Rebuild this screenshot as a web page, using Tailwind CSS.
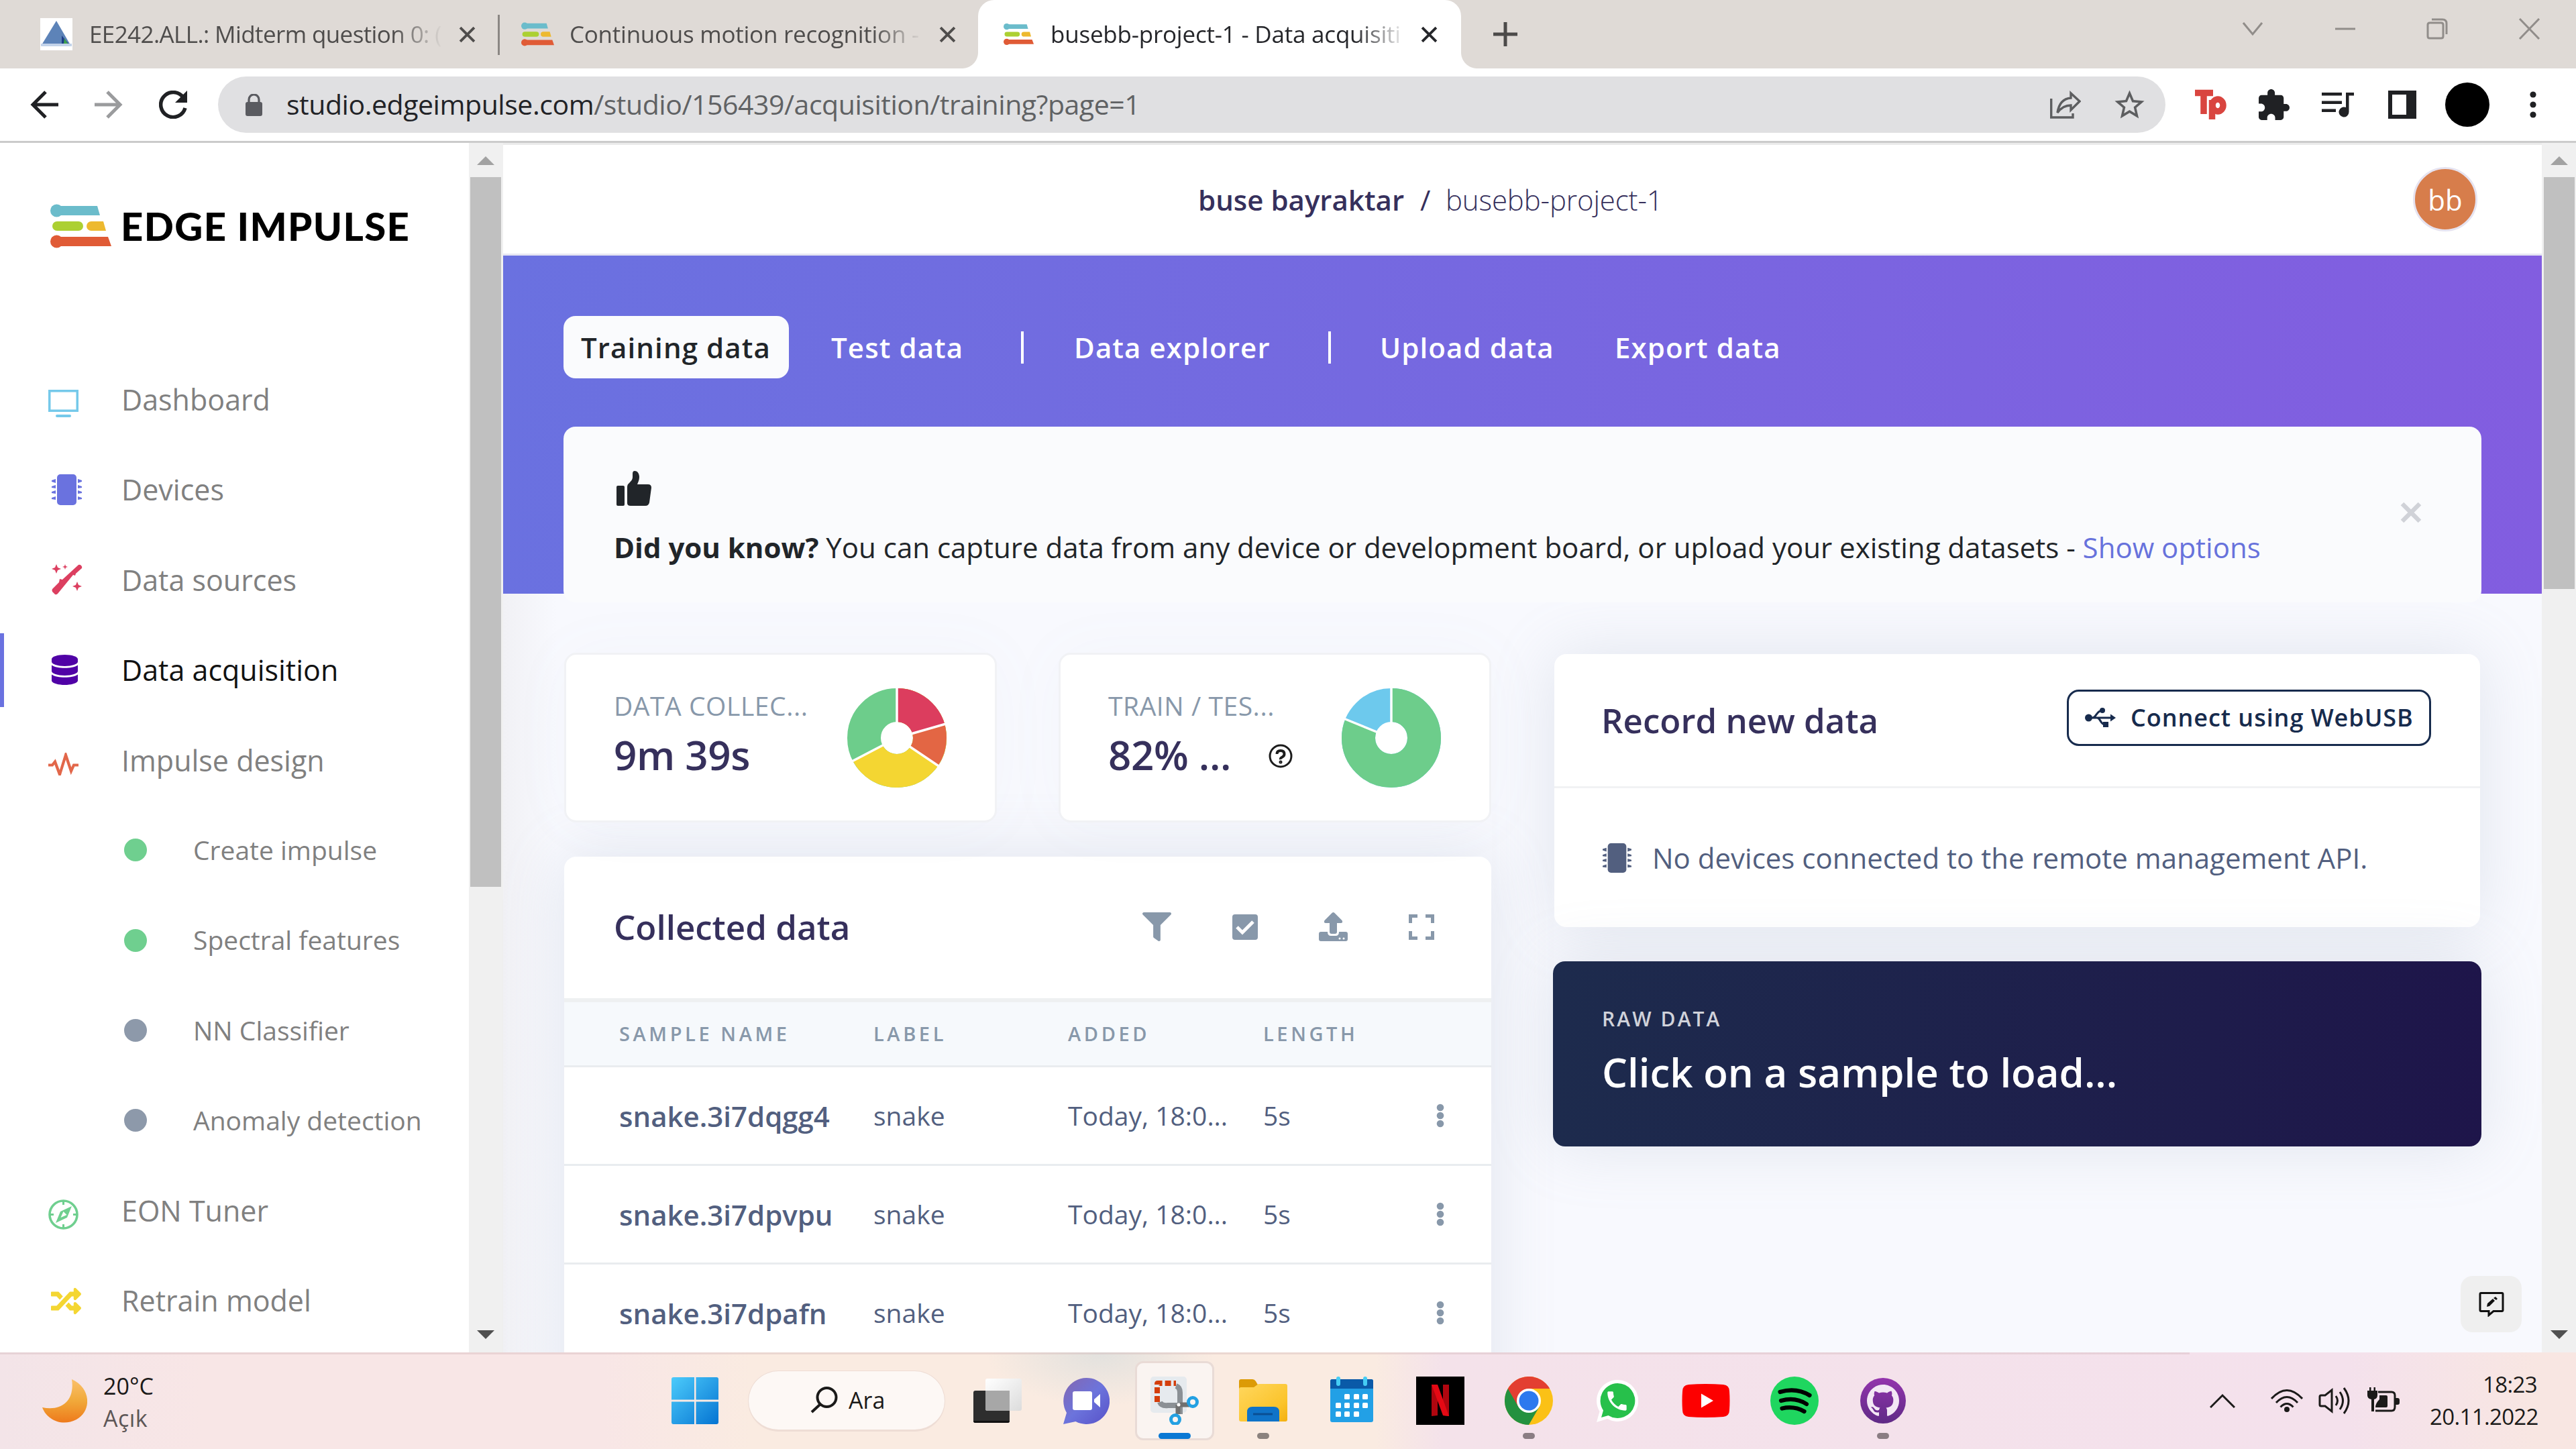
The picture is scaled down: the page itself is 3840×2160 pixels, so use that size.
<!DOCTYPE html>
<html lang="en">
<head>
<meta charset="utf-8">
<title>busebb-project-1 - Data acquisition - Edge Impulse</title>
<script src="https://cdn.jsdelivr.net/npm/@tailwindcss/browser@4"></script>
</head>
<body>
<svg class="hidden">
  <defs>
    <symbol id="chip" viewBox="0 0 45 46">
      <rect x="8" y="0" width="29" height="46" rx="5"/>
      <path d="M0 9l6-2v6l-6-2zM0 18l6-2v5l-6-1zM0 26l6-2v5l-6-1zM0 35l6-2v5l-6-1zM45 9l-6-2v6l6-2zM45 18l-6-2v5l6-1zM45 26l-6-2v5l6-1zM45 35l-6-2v5l6-1z"/>
    </symbol>
    <symbol id="ei" viewBox="0 0 91 66">
      <path d="M9 3h61l4 14H9z" fill="#6bbccb"/><circle cx="9.500" cy="10" r="9.500" fill="#6bbccb"/>
      <rect x="3" y="26" width="46" height="14" rx="7" fill="#acd032"/>
      <path d="M61 26h18l4 14H61a7 7 0 0 1 0-14z" fill="#edb92f"/>
      <path d="M9 49h77l5 14H9z" fill="#e05b36"/><circle cx="9.500" cy="56" r="9.500" fill="#e05b36"/>
    </symbol>
    <symbol id="x" viewBox="0 0 24 24"><path d="M2 2l20 20M22 2L2 22" fill="none" stroke="currentColor" stroke-width="3.800"/></symbol>
    <symbol id="kebab" viewBox="0 0 12 36"><circle cx="6" cy="6" r="5.300"/><circle cx="6" cy="18" r="5.300"/><circle cx="6" cy="30" r="5.300"/></symbol>
  </defs>
</svg>

<div class="relative flex h-[2160px] w-[3840px] flex-col overflow-hidden bg-white font-['Open_Sans','Noto_Sans',sans-serif] whitespace-nowrap">

  <!-- Tab strip -->
  <div class="flex h-[102px] shrink-0 bg-[#dfdad6] text-[35px] text-[#4f4d4c]">
    <div class="flex h-[102px] w-[742px] items-center pl-[60px]">
      <svg class="h-12 w-12 shrink-0" viewBox="0 0 48 48"><rect width="48" height="48" fill="#fff"/><path d="M24 4L45 40H2z" fill="#5d83b8"/><path d="M1 38h46v4H1z" fill="#c3d3ea"/><path d="M32 26l10 12H32z" fill="#1f3f88"/><path d="M36 30l5 8h-6z" fill="#3fa34d"/></svg>
      <div class="ml-[25px] w-[527px] tracking-[-0.6px] [mask-image:linear-gradient(90deg,#000_86%,transparent_100%)]">EE242.ALL.: Midterm question 0: (</div>
      <svg class="ml-[24px] h-[25px] w-[25px] shrink-0"><use href="#x"/></svg>
    </div>
    <div class="mt-[22px] h-[60px] w-[3px] bg-[#8b8784]"></div>
    <div class="flex h-[102px] w-[713px] items-center pl-[32px]">
      <svg class="h-[36px] w-[49px] shrink-0"><use href="#ei"/></svg>
      <div class="ml-[23px] w-[526px] tracking-[-0.25px] [mask-image:linear-gradient(90deg,#000_86%,transparent_100%)]">Continuous motion recognition -</div>
      <svg class="ml-[25px] h-[25px] w-[25px] shrink-0"><use href="#x"/></svg>
    </div>
    <div class="relative flex h-[102px] w-[720px] items-center rounded-t-[24px] bg-white pl-[38px] text-[#26272b]">
      <div class="absolute bottom-0 -left-[24px] h-[24px] w-[24px] bg-[radial-gradient(circle_at_0_0,transparent_23.5px,#fff_24.5px)]"></div>
      <div class="absolute -right-[24px] bottom-0 h-[24px] w-[24px] bg-[radial-gradient(circle_at_100%_0,transparent_23.5px,#fff_24.5px)]"></div>
      <svg class="h-[34px] w-[45px] shrink-0"><use href="#ei"/></svg>
      <div class="ml-[25px] w-[526px] tracking-[-0.22px] [mask-image:linear-gradient(90deg,#000_86%,transparent_101%)]">busebb-project-1 - Data acquisiti</div>
      <svg class="ml-[26px] h-[25px] w-[25px] shrink-0"><use href="#x"/></svg>
    </div>
    <svg class="mt-[33px] ml-[48px] h-[36px] w-[36px]" viewBox="0 0 36 36"><path d="M18 0v36M0 18h36" stroke="#4c4a49" stroke-width="5"/></svg>
    <svg class="mt-[27px] mr-[21px] ml-auto h-[32px] w-[476px]" viewBox="0 0 476 32" fill="none" stroke="#918d8a" stroke-width="3"><path d="M1 7l14 17L29 7M138 16h30M276 10q0-3 3-3h17q3 0 3 3v17q0 3-3 3h-17q-3 0-3-3zM282 2h16q6 0 6 6v16M413 1l29 30M442 1l-29 30"/></svg>
  </div>

  <!-- Toolbar -->
  <div class="flex h-[111px] shrink-0 items-center border-b-[3px] border-[#cbcbcb] bg-white pl-[45px]">
    <svg class="h-[42px] w-[42px]" viewBox="0 0 42 42" fill="none" stroke="#202124" stroke-width="5"><path d="M42 21H4M23 2L4 21l19 19"/></svg>
    <svg class="ml-[54px] h-[42px] w-[42px]" viewBox="0 0 42 42" fill="none" stroke="#9a9b9d" stroke-width="5"><path d="M0 21h38M19 2l19 19-19 19"/></svg>
    <svg class="ml-[54px] h-[42px] w-[42px]" viewBox="0 0 42 42"><path d="M36 10A18.500 18.500 0 1 0 39 26" fill="none" stroke="#202124" stroke-width="5.500"/><path d="M42 0v18H24z" fill="#202124"/></svg>
    <div class="ml-[46px] flex h-[84px] w-[2903px] items-center rounded-full bg-[#e0e0e2] pl-[41px]">
      <svg class="h-[33px] w-[25px]" viewBox="0 0 25 33"><rect y="12" width="25" height="21" rx="3" fill="#5a5b60"/><path d="M5 13V8.500a7.500 7.500 0 0 1 15 0V13" fill="none" stroke="#5a5b60" stroke-width="3.200"/></svg>
      <div class="ml-[36px] text-[41px] tracking-[-0.45px] text-[#606264]"><span class="text-[#222327]">studio.edgeimpulse.com</span>/studio/156439/acquisition/training?page=1</div>
      <svg class="mr-[46px] ml-auto h-[42px] w-[46px]" viewBox="0 0 46 42" fill="none" stroke="#5d5e60" stroke-width="3.400"><path d="M1.700 12v28H34V34M31 4l13 12-13 13v-7c-9 0-15 4-20 11 2-13 8-21 20-22z"/></svg>
      <svg class="mr-[27px] h-[53px] w-[53px]" viewBox="0 0 24 24" fill="#5d5e60"><path d="M22 9.240l-7.190-.62L12 2 9.190 8.630 2 9.240l5.460 4.730L5.820 21 12 17.270 18.180 21l-1.630-7.030L22 9.240zM12 15.400l-3.760 2.270 1-4.280-3.320-2.880 4.380-.38L12 6.100l1.710 4.040 4.380.38-3.320 2.880 1 4.280L12 15.400z"/></svg>
    </div>
    <svg class="ml-[43px] h-[46px] w-[48px]" viewBox="0 0 48 46"><g fill="none" stroke="#d9453f" stroke-width="9.500"><path d="M1 5.500h27M14 5v32"/><ellipse cx="35" cy="24" rx="8" ry="9"/><path d="M26.500 16v29"/></g></svg>
    <svg class="ml-[46px] h-[46px] w-[50px]" viewBox="1.500 1 22 21" fill="#202124"><path d="M20.500 11H19V7c0-1.100-.9-2-2-2h-4V3.500C13 2.120 11.880 1 10.500 1S8 2.120 8 3.500V5H4c-1.100 0-1.990.9-1.990 2v3.800H3.500c1.490 0 2.700 1.210 2.700 2.700s-1.210 2.700-2.700 2.700H2V20c0 1.100.9 2 2 2h3.800v-1.500c0-1.490 1.210-2.700 2.700-2.700 1.490 0 2.700 1.210 2.700 2.700V22H17c1.100 0 2-.9 2-2v-4h1.500c1.380 0 2.500-1.120 2.500-2.500S21.880 11 20.500 11z"/></svg>
    <svg class="ml-[46px] h-[37px] w-[48px]" viewBox="0 0 48 37" fill="#202124"><path d="M0 0h30v4.500H0zM0 12.500h30V17H0zM0 24.500h21V29H0zM36 0h12v4.500h-7.500V29a7.500 7.500 0 1 1-4.500-6.900z"/></svg>
    <svg class="ml-[51px] h-[42px] w-[42px]" viewBox="0 0 42 42"><path d="M0 0h42v42H0zM6 6v30h21V6z" fill="#202124" fill-rule="evenodd"/></svg>
    <div class="ml-[43px] h-[66px] w-[66px] rounded-full bg-black"></div>
    <svg class="ml-[60px] h-[40px] w-[10px]" viewBox="0 0 10 40" fill="#202124"><circle cx="5" cy="5" r="4.600"/><circle cx="5" cy="20" r="4.600"/><circle cx="5" cy="35" r="4.600"/></svg>
  </div>

  <!-- Page -->
  <div class="flex h-[1803px] shrink-0 overflow-hidden">

    <!-- Sidebar -->
    <aside class="flex w-[699px] shrink-0 flex-col bg-white text-[43px] text-[#808080]">
      <div class="flex h-[315px] shrink-0 items-start pt-[91px] pl-[75px]">
        <svg class="h-[66px] w-[91px] shrink-0"><use href="#ei"/></svg>
        <div class="ml-[14px] font-['Lato',sans-serif] text-[58px] leading-[66px] font-black tracking-[1.4px] text-black">EDGE IMPULSE</div>
      </div>
      <div class="flex h-[134.400px] shrink-0 items-center pl-[72px]">
        <div class="w-[109px]"><svg class="mt-[12px] h-[42px] w-[45px]" viewBox="0 0 45 42" fill="#75c9ea"><path d="M0 1h45v33H0zM3.500 4.500v26h38v-26z" fill-rule="evenodd"/><rect x="11" y="38" width="23" height="4" rx="2"/></svg></div>
        <span class="mt-[2px]">Dashboard</span>
      </div>
      <div class="flex h-[134.400px] shrink-0 items-center pl-[77px]">
        <div class="w-[104px]"><svg class="h-[46px] w-[45px] fill-[#6a72df]"><use href="#chip"/></svg></div>
        <span class="mt-[2px]">Devices</span>
      </div>
      <div class="flex h-[134.400px] shrink-0 items-center pl-[77px]">
        <div class="w-[104px]"><svg class="h-[46px] w-[46px]" viewBox="0 0 46 46" fill="#dc3f60"><path d="M1 37L11 27l1-5 4 1L40 1q2-1 4 1t1 4L36 14l-1 3-3-1L9 44q-2 2-4 1l-4-4q-1-2 0-4z"/><path d="M7 0l2 5 5 2-5 2-2 5-2-5-5-2 5-2zM20 0l1 3 3 1-3 1-1 3-1-3-3-1 3-1zM38 26l2 5 5 2-5 2-2 5-2-5-5-2 5-2z"/></svg></div>
        <span class="mt-[2px]">Data sources</span>
      </div>
      <div class="relative flex h-[134.400px] shrink-0 items-center pl-[77px] text-[#121212]">
        <div class="absolute top-[13px] left-0 h-[110px] w-[6px] bg-[#6a72e0]"></div>
        <div class="w-[104px]"><svg class="h-[45px] w-[39px]" viewBox="0 0 448 512" preserveAspectRatio="none" fill="#5002a6"><path d="M448 73.143v45.714C448 159.143 347.667 192 224 192S0 159.143 0 118.857V73.143C0 32.857 100.333 0 224 0s224 32.857 224 73.143zM448 176v102.857C448 319.143 347.667 352 224 352S0 319.143 0 278.857V176c48.125 33.143 136.208 48.572 224 48.572S399.874 209.143 448 176zm0 160v102.857C448 479.143 347.667 512 224 512S0 479.143 0 438.857V336c48.125 33.143 136.208 48.572 224 48.572S399.874 369.143 448 336z"/></svg></div>
        <span class="mt-[2px]">Data acquisition</span>
      </div>
      <div class="flex h-[134.400px] shrink-0 items-center pl-[72px]">
        <div class="w-[109px]"><svg class="mt-[12px] h-[34px] w-[45px]" viewBox="0 0 45 34" fill="none" stroke="#e2674a" stroke-width="4.200"><path d="M0 18.500h6l4-5 7 19 9-29 8 24 4-9h7"/></svg></div>
        <span class="mt-[2px]">Impulse design</span>
      </div>
      <div class="flex h-[134.400px] shrink-0 items-center pl-[185px] text-[39px]"><div class="mr-[69px] h-[34px] w-[34px] rounded-full bg-[#6fcf8f]"></div><span>Create impulse</span></div>
      <div class="flex h-[134.400px] shrink-0 items-center pl-[185px] text-[39px]"><div class="mr-[69px] h-[34px] w-[34px] rounded-full bg-[#6fcf8f]"></div><span>Spectral features</span></div>
      <div class="flex h-[134.400px] shrink-0 items-center pl-[185px] text-[39px]"><div class="mr-[69px] h-[34px] w-[34px] rounded-full bg-[#8d99aa]"></div><span>NN Classifier</span></div>
      <div class="flex h-[134.400px] shrink-0 items-center pl-[185px] text-[39px]"><div class="mr-[69px] h-[34px] w-[34px] rounded-full bg-[#8d99aa]"></div><span>Anomaly detection</span></div>
      <div class="flex h-[134.400px] shrink-0 items-center pl-[72px]">
        <div class="w-[109px]"><svg class="mt-[11px] h-[45px] w-[45px]" viewBox="0 0 45 45" fill="none" stroke="#6fcf8f" stroke-width="3.600"><circle cx="22.500" cy="22.500" r="20.500"/><path d="M22.500 3v5M22.500 37v5M3 22.500h5M37 22.500h5" stroke-width="3"/><path d="M35 10l-7 17-17 8 7-17zM22.500 18l5 5-9 4z" fill="#6fcf8f" fill-rule="evenodd" stroke="none"/></svg></div>
        <span class="mt-[1px]">EON Tuner</span>
      </div>
      <div class="flex h-[134.400px] shrink-0 items-center pl-[76px]">
        <div class="w-[105px]"><svg class="h-[45px] w-[45px]" viewBox="0 0 512 512" fill="#f4d632"><path d="M504.971 359.029c9.373 9.373 9.373 24.569 0 33.941l-80 79.984c-15.010 15.010-40.971 4.490-40.971-16.971V416h-58.785a12.004 12.004 0 0 1-8.773-3.812l-70.556-75.596 53.333-57.143L352 336h32v-39.981c0-21.438 25.943-31.998 40.971-16.971l80 79.981zM12 176h84l52.781 56.551 53.333-57.143-70.556-75.596A11.999 11.999 0 0 0 122.785 96H12c-6.627 0-12 5.373-12 12v56c0 6.627 5.373 12 12 12zm372 0v39.984c0 21.460 25.961 31.980 40.971 16.971l80-79.984c9.373-9.373 9.373-24.569 0-33.941l-80-79.981C409.943 24.021 384 34.582 384 56.019V96h-58.785a12.004 12.004 0 0 0-8.773 3.812L96 336H12c-6.627 0-12 5.373-12 12v56c0 6.627 5.373 12 12 12h110.785c3.326 0 6.503-1.381 8.773-3.812L352 176h32z"/></svg></div>
        <span class="mt-[1px]">Retrain model</span>
      </div>
    </aside>
    <div class="flex w-[51px] shrink-0 flex-col items-center bg-[#f0f0f0] pt-[20px] pr-[1px]">
      <svg class="h-[13px] w-[26px]" viewBox="0 0 26 13"><path d="M13 0l13 13H0z" fill="#a2a2a2"/></svg>
      <div class="mt-[18px] h-[1058px] w-[46px] bg-[#c0c0c0]"></div>
      <svg class="mt-auto mb-[20px] h-[13px] w-[26px]" viewBox="0 0 26 13"><path d="M13 13L26 0H0z" fill="#505050"/></svg>
    </div>

    <!-- Main -->
    <main class="relative flex w-[3039px] shrink-0 flex-col bg-[linear-gradient(90deg,#f1f1f5_0px,#f8f9fe_80px)]">
      <div class="relative flex h-[168px] shrink-0 items-center border-t-[3px] border-b-[3px] border-t-[#ebebeb] border-b-[#e6e6f2] bg-white pl-[1036px] text-[42px] text-[#36305c]">
        <span class="w-[331px] font-semibold">buse bayraktar</span><span class="w-[38px]">/</span><span class="font-light tracking-[-0.15px]">busebb-project-1</span>
        <div class="mr-[96px] ml-auto flex h-[96px] w-[96px] items-center justify-center rounded-full border-[3px] border-[#e6e3f0] bg-[#d77d4b] text-white">bb</div>
      </div>
      <section class="h-[504px] shrink-0 bg-linear-to-r from-[#6a71e0] to-[#825de0] pt-[90px] pl-[90px]">
        <nav class="flex h-[93px] items-center text-[42px] font-semibold tracking-[1.1px] text-white">
          <div class="flex h-[93px] w-[336px] items-center rounded-[18px] bg-[#fafbfd] pl-[26px] text-[#212529]">Training data</div>
          <div class="ml-[63px] w-[283px]">Test data</div>
          <div class="h-[48px] w-[4px] bg-white"></div>
          <div class="ml-[75px] w-[379px]">Data explorer</div>
          <div class="h-[48px] w-[4px] bg-white"></div>
          <div class="ml-[73px] w-[350px]">Upload data</div>
          <div>Export data</div>
        </nav>
        <div class="relative mt-[72px] flex h-[262px] w-[2859px] flex-col rounded-[18px] bg-[#fafbfd] pt-[66px] pl-[75px] text-[42px] text-[#212529]">
          <svg class="ml-[4px] h-[52px] w-[52px]" viewBox="0 0 52 52" fill="#212529"><rect y="22" width="12" height="30" rx="2"/><path d="M16 24q0-4 3-6c4-4 5-6 5-9V4q0-4 3-4c5 0 7 5 7 9 0 5-2 8-3 11h16q5 0 5 5l-3 22q-1 5-6 5H21q-5 0-5-4z"/></svg>
          <div class="mt-[31px] leading-[62px]"><b>Did you know?</b> You can capture data from any device or development board, or upload your existing datasets - <span class="text-[#6772dc]">Show options</span></div>
          <svg class="absolute top-[111px] right-[88px] h-[34px] w-[34px]" viewBox="0 0 34 34"><path d="M4 4l26 26M30 4L4 30" stroke="#d0d2d8" stroke-width="6.500"/></svg>
        </div>
      </section>

      <div class="flex pt-[88px] pl-[91px]">
        <div class="w-[1382px]">
          <div class="flex justify-between">
            <div class="flex h-[253px] w-[645px] justify-between rounded-[18px] border-[3px] border-[#f1f2f5] bg-white pt-[43px] pr-[72px] pl-[71px] shadow-[0_0_96px_rgba(136,152,170,0.04)]">
              <div>
                <div class="pt-[3px] text-[39px] leading-[60px] tracking-[0.55px] text-[#8898aa]">DATA COLLEC...</div>
                <div class="mt-[1px] text-[60px] leading-[84px] font-semibold tracking-[-0.3px] text-[#36305c]">9m 39s</div>
              </div>
              <svg class="mt-[7px] h-[148px] w-[148px] shrink-0" viewBox="-74 -74 148 148"><g transform="rotate(-90)" fill="none" stroke-width="50"><circle r="49" pathLength="360" stroke="#6dcd8b"/><circle r="49" pathLength="360" stroke="#f4d632" stroke-dasharray="242 360"/><circle r="49" pathLength="360" stroke="#e36644" stroke-dasharray="124 360"/><circle r="49" pathLength="360" stroke="#dc3d5e" stroke-dasharray="74 360"/></g><path d="M0 0V-76M0 0L73-21M0 0L63 42.500M0 0L-67 35" stroke="#fff" stroke-width="3.500"/></svg>
            </div>
            <div class="flex h-[253px] w-[645px] justify-between rounded-[18px] border-[3px] border-[#f1f2f5] bg-white pt-[43px] pr-[72px] pl-[71px] shadow-[0_0_96px_rgba(136,152,170,0.04)]">
              <div>
                <div class="pt-[3px] text-[39px] leading-[60px] tracking-[0.55px] text-[#8898aa]">TRAIN / TES...</div>
                <div class="mt-[1px] flex text-[60px] leading-[84px] font-semibold tracking-[-0.3px] text-[#36305c]"><span class="w-[239px]">82% ...</span><svg class="mt-[26px] h-[36px] w-[36px]" viewBox="0 0 36 36" fill="none" stroke="#1c1c1c"><circle cx="18" cy="18" r="16" stroke-width="3"/><path d="M12.500 15q0-5 5.500-5t5.500 5q0 3-3 4.500t-2.500 3.500" stroke-width="4"/><circle cx="18" cy="27" r="1" stroke-width="3"/></svg></div>
              </div>
              <svg class="mt-[7px] h-[148px] w-[148px] shrink-0" viewBox="-74 -74 148 148"><g transform="rotate(-90)" fill="none" stroke-width="50"><circle r="49" pathLength="360" stroke="#6dc9ed"/><circle r="49" pathLength="360" stroke="#6dcd8b" stroke-dasharray="292 360"/></g><path d="M0 0V-76M0 0L-71-29" stroke="#fff" stroke-width="3.500"/></svg>
            </div>
          </div>

          <div class="mt-[51px] h-[900px] rounded-[18px] bg-white text-[#525f7f] shadow-[0_0_96px_rgba(136,152,170,0.2)]">
            <div class="flex h-[211px] items-center pr-[85px] pb-[2px] pl-[74px] text-[51px] font-semibold text-[#36305c]">
              <span>Collected data</span>
              <svg class="ml-auto h-[43px] w-[43px]" viewBox="0 0 512 512" fill="#8898aa"><path d="M487.976 0H24.028C2.710 0-8.047 25.866 7.058 40.971L192 225.941V432c0 7.831 3.821 15.170 10.237 19.662l80 55.980C298.020 518.690 320 507.493 320 487.980V225.941l184.947-184.970C520.021 25.896 509.338 0 487.976 0z"/></svg>
              <svg class="ml-[91px] h-[38px] w-[38px]" viewBox="0 0 38 38"><rect width="38" height="38" rx="4" fill="#8898aa"/><path d="M7 19l8 8 16-16" fill="none" stroke="#fff" stroke-width="5"/></svg>
              <svg class="ml-[91px] h-[43px] w-[43px]" viewBox="0 0 43 43" fill="#8898aa"><path d="M21.500 0q1 0 2 1l11 11q2 4-2 4H27v13q0 3-3 3h-5q-3 0-3-3V16h-5.500q-4 0-2-4l11-11q1-1 2-1z"/><path d="M0 32q0-3 3-3h10q0 6 5 6h7q5 0 5-6h10q3 0 3 3v8q0 3-3 3H3q-3 0-3-3z"/><circle cx="31" cy="39" r="1.500" fill="#fff"/><circle cx="37" cy="39" r="1.500" fill="#fff"/></svg>
              <svg class="ml-[91px] h-[38px] w-[38px]" viewBox="0 0 38 38" fill="none" stroke="#8898aa" stroke-width="5"><path d="M2.500 13V2.500H13M25 2.500h10.500V13M35.500 25v10.500H25M13 35.500H2.500V25"/></svg>
            </div>
            <div class="grid h-[103px] grid-cols-[379px_290px_291px_auto] items-center border-t-[6px] border-b-[3px] border-t-[#eef0f1] border-b-[#e9ecef] bg-[#f6f9fc] pl-[82px] text-[29px] font-semibold tracking-[4.6px] text-[#8898aa]">
              <span>SAMPLE NAME</span><span>LABEL</span><span>ADDED</span><span>LENGTH</span>
            </div>
            <div class="grid h-[147px] grid-cols-[379px_290px_291px_258px_auto] items-center border-b-[3px] border-[#e9ecef] pl-[82px] text-[39px]">
              <span class="text-[42px] font-semibold">snake.3i7dqgg4</span><span>snake</span><span>Today, 18:0...</span><span>5s</span><svg class="h-[36px] w-[12px] fill-[#8898aa]"><use href="#kebab"/></svg>
            </div>
            <div class="grid h-[147px] grid-cols-[379px_290px_291px_258px_auto] items-center border-b-[3px] border-[#e9ecef] pl-[82px] text-[39px]">
              <span class="text-[42px] font-semibold">snake.3i7dpvpu</span><span>snake</span><span>Today, 18:0...</span><span>5s</span><svg class="h-[36px] w-[12px] fill-[#8898aa]"><use href="#kebab"/></svg>
            </div>
            <div class="grid h-[147px] grid-cols-[379px_290px_291px_258px_auto] items-center border-b-[3px] border-[#e9ecef] pl-[82px] text-[39px]">
              <span class="text-[42px] font-semibold">snake.3i7dpafn</span><span>snake</span><span>Today, 18:0...</span><span>5s</span><svg class="h-[36px] w-[12px] fill-[#8898aa]"><use href="#kebab"/></svg>
            </div>
          </div>
        </div>

        <div class="ml-[92px] w-[1384px]">
          <div class="mt-[2px] ml-[2px] h-[407px] w-[1380px] rounded-[18px] bg-white shadow-[0_0_96px_rgba(136,152,170,0.2)]">
            <div class="flex h-[200px] items-center justify-between border-b-[3px] border-[#f1f2f4] pr-[73px] pl-[70px] text-[51px] font-semibold text-[#36305c]">
              <span>Record new data</span>
              <div class="mb-[7px] flex h-[84px] w-[543px] shrink-0 items-center rounded-[18px] border-[3px] border-[#172b4d] pl-[24px] text-[36px] tracking-[0.95px] text-[#172b4d]">
                <svg class="h-[30px] w-[46px] shrink-0" viewBox="0 0 46 30"><g fill="#172b4d"><circle cx="5.500" cy="15" r="5.500"/><path d="M38 9.500l8 5.500-8 5.500z"/><circle cx="26" cy="4" r="4"/><path d="M27 21h8v8h-8z"/></g><path d="M5 15h34M11 15c6 0 6-11 15-11M18 15c5 0 5 10 12 10" fill="none" stroke="#172b4d" stroke-width="3"/></svg>
                <span class="ml-[22px]">Connect using WebUSB</span>
              </div>
            </div>
            <div class="flex h-[207px] items-center pl-[72px] text-[42px] text-[#525f7f]">
              <svg class="mr-[31px] h-[44px] w-[43px] fill-[#525f7f]"><use href="#chip"/></svg>No devices connected to the remote management API.
            </div>
          </div>
          <div class="mt-[51px] h-[276px] rounded-[18px] bg-linear-to-r from-[#1d2b4d] to-[#1e154a] pt-[65px] pl-[73px] font-semibold shadow-[0_0_96px_rgba(136,152,170,0.2)]">
            <div class="text-[30px] leading-[42px] tracking-[3.1px] text-[#d0d2da]">RAW DATA</div>
            <div class="mt-[18px] text-[60px] leading-[80px] text-white">Click on a sample to load...</div>
          </div>
        </div>
      </div>
      <div class="absolute right-[30px] bottom-[30px] flex h-[84px] w-[91px] items-center justify-center rounded-[18px] bg-[#efefef]">
        <svg class="h-[37px] w-[38px]" viewBox="0 0 38 37"><path d="M2 3q0-1.500 1.500-1.500h31q1.500 0 1.500 1.500v24q0 1.500-1.500 1.500H22l-7 6v-6H3.500Q2 28.500 2 27z" fill="none" stroke="#111" stroke-width="3"/><path d="M12 22l1-5 8-7 3 3-8 8zM22 9l3-2 3 3-2 2z" fill="#111"/></svg>
      </div>
    </main>
    <div class="flex w-[51px] shrink-0 flex-col items-center bg-[#f0f0f0] pt-[20px]">
      <svg class="h-[13px] w-[26px]" viewBox="0 0 26 13"><path d="M13 0l13 13H0z" fill="#a2a2a2"/></svg>
      <div class="mt-[18px] h-[614px] w-[46px] bg-[#c0c0c0]"></div>
      <svg class="mt-auto mb-[20px] h-[13px] w-[26px]" viewBox="0 0 26 13"><path d="M13 13L26 0H0z" fill="#505050"/></svg>
    </div>
  </div>

  <!-- Taskbar -->
  <div class="relative flex h-[144px] shrink-0 items-center bg-[radial-gradient(ellipse_170px_80px_at_1640px_0px,#e2e1de,transparent),linear-gradient(90deg,#f3e4e8_0px,#f8e6e6_300px,#f8e6e6_900px,#faebe1_1120px,#faebe1_2050px,#f4e2ea_2150px,#f4e1ec_3500px,#f8e6e2_3780px)] text-[34px] text-[#1b1a19]">
    <div class="absolute top-0 left-0 h-[3px] w-[3264px] bg-[#c9a8ac]/30"></div>
    <svg class="ml-[62px] h-[66px] w-[68px]" viewBox="0 0 68 66"><defs><linearGradient id="mn" x1="0" y1="0" x2="0" y2="1"><stop offset="0" stop-color="#fac06a"/><stop offset=".5" stop-color="#f1a93a"/><stop offset="1" stop-color="#ee7a1c"/></linearGradient></defs><path d="M45 1C74 14 75 48 52 61 31 72 8 62 1 43c28 6 49-9 44-42z" fill="url(#mn)"/></svg>
    <div class="ml-[24px] w-[816px] pt-[3px] leading-[48px]"><div>20°C</div><div class="tracking-[0.5px] text-[#5d5656]">Açık</div></div>
    <div class="flex w-[132px] justify-center"><svg class="h-[70px] w-[70px]" viewBox="0 0 70 70"><defs><linearGradient id="w" x1="0" y1="0" x2="1" y2="1"><stop offset="0" stop-color="#4ccbfb"/><stop offset="1" stop-color="#0574d2"/></linearGradient></defs><path d="M3 0h31v33.500H0V3q0-3 3-3zM36.500 0H67q3 0 3 3v30.500H36.500zM0 36.500h34V70H3q-3 0-3-3zM36.500 36.500H70V67q0 3-3 3H36.500z" fill="url(#w)"/></svg></div>
    <div class="ml-[13px] flex h-[91px] w-[294px] items-center rounded-full border border-b-[3px] border-[#eeddd5] bg-[#fdf8f5] pl-[92px]">
      <svg class="h-[40px] w-[41px]" viewBox="0 0 41 40" fill="none" stroke="#1b1a19" stroke-width="4"><circle cx="24.500" cy="16" r="14"/><path d="M14 27L2 38"/></svg>
      <span class="ml-[16px]">Ara</span>
    </div>
    <div class="ml-[12px] flex">
      <div class="flex h-[144px] w-[132px] items-center justify-center"><svg class="h-[72px] w-[72px]" viewBox="0 0 72 72"><defs><linearGradient id="tv" x1="0" y1="0" x2="1" y2="1"><stop offset="0" stop-color="#fff"/><stop offset="1" stop-color="#dcdcdc"/></linearGradient></defs><rect y="21" width="54" height="48" rx="3" fill="#2e2e2e"/><path d="M0 66h54q0 3-3 3H3q-3 0-3-3z" fill="#111"/><rect x="18" y="3" width="54" height="48" rx="3" fill="url(#tv)"/><path d="M18 21h36v30H21q-3 0-3-3z" fill="#a7a7a7"/></svg></div>
      <div class="flex h-[144px] w-[132px] items-center justify-center"><svg class="h-[69px] w-[69px]" viewBox="0 0 69 69"><defs><linearGradient id="ct" x1="0" y1="0" x2="1" y2="1"><stop offset="0" stop-color="#8467b0"/><stop offset=".5" stop-color="#6c74dc"/><stop offset="1" stop-color="#5751c8"/></linearGradient></defs><path d="M34.500 0a34.500 34.500 0 1 1-16 65L0 69l5-17A34.500 34.500 0 0 1 34.500 0z" fill="url(#ct)"/><path d="M17 20h23q3 0 3 3v22q0 3-3 3H17q-3 0-3-3V23q0-3 3-3zM46 32l9-8v20l-9-8z" fill="#fff"/></svg></div>
      <div class="relative flex h-[144px] w-[132px] items-center justify-center"><div class="absolute top-[13px] h-[118px] w-[118px] rounded-[12px] border-[3px] border-[#e9dbd6] bg-[#faf4f1]"></div><svg class="relative h-[72px] w-[72px]" viewBox="0 0 72 72"><rect width="54" height="54" rx="5" fill="#e6eaee"/><g fill="none"><path d="M10 38V11q0-1 1-1h27" stroke="#d43e0c" stroke-width="8" stroke-dasharray="9 4"/><path d="M38 14q6 2 6 10v32M14 38q2 6 12 5h22" stroke="#8b9095" stroke-width="8"/><path d="M41 42v14M44 42h14" stroke="#707070" stroke-width="7"/><circle cx="63" cy="38" r="6.500" stroke="#23a0e2" stroke-width="5"/><circle cx="37" cy="64" r="6.500" stroke="#23a0e2" stroke-width="5"/></g><circle cx="42" cy="42" r="2.500" fill="#fff"/></svg><div class="absolute bottom-[15px] h-[9px] w-[48px] rounded-full bg-[#0a78d4]"></div></div>
      <div class="relative flex h-[144px] w-[132px] items-center justify-center"><svg class="h-[66px] w-[72px]" viewBox="0 0 72 66"><defs><linearGradient id="fd" x1="0" y1="0" x2="1" y2="1"><stop offset="0" stop-color="#ffd75e"/><stop offset=".7" stop-color="#fbc42c"/><stop offset="1" stop-color="#f3b010"/></linearGradient></defs><path d="M0 18V4q0-3 3-3h17q3 0 5 3l4 7-9 10H0z" fill="#dc9b06"/><path d="M0 16q0-3 3-3h19l7-5h40q3 0 3 3v50q0 3-3 3H3q-3 0-3-3z" fill="url(#fd)"/><path d="M12 64V50q0-8 8-8h32q8 0 8 8v14z" fill="#0f73c8"/><path d="M21 53h29" stroke="#0a4f93" stroke-width="3"/></svg><div class="absolute bottom-[15px] h-[9px] w-[18px] rounded-full bg-[#8b827e]"></div></div>
      <div class="flex h-[144px] w-[132px] items-center justify-center"><svg class="mb-[4px] h-[68px] w-[64px]" viewBox="0 0 64 68"><rect y="4" width="64" height="64" rx="3" fill="#22a0e6"/><path d="M3 4h58q3 0 3 3v11H0V7q0-3 3-3z" fill="#0a5aa8"/><g fill="#fff"><rect x="21" y="26" width="8" height="8" rx="1.500"/><rect x="35" y="26" width="8" height="8" rx="1.500"/><rect x="48" y="26" width="8" height="8" rx="1.500"/><rect x="8" y="39" width="8" height="8" rx="1.500"/><rect x="21" y="39" width="8" height="8" rx="1.500"/><rect x="35" y="39" width="8" height="8" rx="1.500"/><rect x="48" y="39" width="8" height="8" rx="1.500"/><rect x="8" y="52" width="8" height="8" rx="1.500"/><rect x="21" y="52" width="8" height="8" rx="1.500"/><rect x="35" y="52" width="8" height="8" rx="1.500"/></g><g fill="#45cdf5"><rect x="9" width="6" height="14" rx="3"/><rect x="49" width="6" height="14" rx="3"/></g></svg></div>
      <div class="flex h-[144px] w-[132px] items-center justify-center"><svg class="h-[72px] w-[72px]" viewBox="0 0 72 72"><rect width="72" height="72"/><path d="M23 12h9v46l-9 1zM40 12h9v47l-9-1z" fill="#b1060f"/><path d="M23 12h9l17 47-9-1z" fill="#e50914"/></svg></div>
      <div class="relative flex h-[144px] w-[132px] items-center justify-center"><svg class="h-[72px] w-[72px]" viewBox="0 0 72 72"><circle cx="36" cy="36" r="36" fill="#fbc116"/><path d="M36 36L4.800 18A36 36 0 0 0 36 72L51.600 45z" fill="#23913f"/><path d="M4.800 18A36 36 0 0 1 67.200 18H36L20.400 45z" fill="#e33f31"/><circle cx="36" cy="36" r="18" fill="#fff"/><circle cx="36" cy="36" r="14.500" fill="#2d79ee"/></svg><div class="absolute bottom-[15px] h-[9px] w-[18px] rounded-full bg-[#8a7d83]"></div></div>
      <div class="flex h-[144px] w-[132px] items-center justify-center"><svg class="h-[63px] w-[62px]" viewBox="0 0 62 63"><path d="M31 0a31 31 0 1 1-15 58L0 63l4.500-16A31 31 0 0 1 31 0z" fill="#fff"/><path d="M31 5a26 26 0 1 1-13.500 48L7 56l3-10.500A26 26 0 0 1 31 5z" fill="#27c04b"/><path transform="translate(11.500 12.500) scale(1.580)" d="M6.620 10.790c1.440 2.830 3.760 5.140 6.590 6.590l2.200-2.200c.27-.27.67-.36 1.020-.24 1.120.37 2.330.57 3.570.57.55 0 1 .45 1 1V20c0 .55-.45 1-1 1-9.390 0-17-7.610-17-17 0-.55.45-1 1-1h3.500c.55 0 1 .45 1 1 0 1.250.2 2.450.57 3.570.11.35.03.74-.25 1.020l-2.200 2.200z" fill="#fff"/></svg></div>
      <div class="flex h-[144px] w-[132px] items-center justify-center"><svg class="h-[50px] w-[72px]" viewBox="0 0 72 50"><path d="M10 1q26-2 52 0 9 1 9 10 1 14 0 28 0 9-9 10-26 2-52 0-9-1-9-10-1-14 0-28 0-9 9-10z" fill="#fd0000"/><path d="M29 14.500L47 25 29 35.500z" fill="#fff"/></svg></div>
      <div class="flex h-[144px] w-[132px] items-center justify-center"><svg class="h-[72px] w-[72px]" viewBox="0 0 72 72"><circle cx="36" cy="36" r="36" fill="#1fd65f"/><path d="M14.500 23q24-7 44 5M16 36q21-6 38 5M17.500 47.500q18-4 33 4.500" fill="none" stroke="#000" stroke-width="6.200" stroke-linecap="round"/></svg></div>
      <div class="relative flex h-[144px] w-[132px] items-center justify-center"><svg class="h-[68px] w-[68px]" viewBox="0 0 68 68"><defs><linearGradient id="gh" x1="0" y1="0" x2="0" y2="1"><stop offset="0" stop-color="#9334ad"/><stop offset="1" stop-color="#5f2a86"/></linearGradient></defs><circle cx="34" cy="34" r="34" fill="url(#gh)"/><path transform="translate(10 10) scale(3)" d="M8 0C3.580 0 0 3.580 0 8c0 3.540 2.290 6.530 5.470 7.590.4.070.55-.17.55-.38 0-.19-.01-.82-.01-1.490-2.010.37-2.530-.49-2.690-.94-.09-.23-.48-.94-.82-1.130-.28-.15-.68-.52-.01-.53.63-.01 1.080.58 1.230.82.72 1.210 1.870.87 2.330.66.07-.52.28-.87.51-1.070-1.780-.2-3.640-.89-3.640-3.950 0-.87.31-1.590.82-2.150-.08-.2-.36-1.020.08-2.120 0 0 .67-.21 2.200.82.64-.18 1.320-.27 2-.27s1.360.09 2 .27c1.530-1.040 2.200-.82 2.200-.82.44 1.100.16 1.920.08 2.120.51.56.82 1.270.82 2.150 0 3.070-1.870 3.750-3.650 3.950.29.25.54.73.54 1.480 0 1.070-.01 1.930-.01 2.200 0 .21.15.46.55.38A8.010 8.010 0 0016 8c0-4.420-3.580-8-8-8z" fill="#f3e7f5"/></svg><div class="absolute bottom-[15px] h-[9px] w-[18px] rounded-full bg-[#8a7d83]"></div></div>
    </div>
    <div class="mr-[58px] ml-auto flex items-center">
      <svg class="h-[22px] w-[38px]" viewBox="0 0 38 22" fill="none" stroke="#1b1a19" stroke-width="3"><path d="M1 21L19 3l18 18"/></svg>
      <svg class="ml-[53px] h-[34px] w-[48px]" viewBox="0 0 48 34" fill="none" stroke="#1b1a19" stroke-width="3"><path d="M1 14q23-25 46 0M8 20q16-17 32 0M14.500 26.500q9.500-10 19 0"/><circle cx="24" cy="30" r="4" fill="#1b1a19" stroke="none"/></svg>
      <svg class="ml-[23px] h-[40px] w-[50px]" viewBox="0 0 50 40" fill="none" stroke="#1b1a19" stroke-width="3"><path d="M2 14q0-2 2-2h6l10-8v32l-10-8H4q-2 0-2-2zM26 13q5 7 0 14M32 7q9 13 0 26M38 1q14 19 0 38"/></svg>
      <svg class="mb-[3px] ml-[23px] h-[38px] w-[48px]" viewBox="0 0 48 38"><path d="M16 7h20q5 0 5 5v17q0 6-5 6H12" fill="none" stroke="#1b1a19" stroke-width="3"/><path d="M42 16h3q3 0 3 3v4q0 3-3 3h-3zM18 12h10q2 0 2 2v14q0 2-2 2H12q0-6 6-12zM3 0h2.500v5h4V0H12v5h3v7q0 5-5 6v18H6V18q-6-1-6-6V5h3z" fill="#1b1a19"/></svg>
      <div class="ml-[45px] w-[160px] text-[33px] leading-[48px] tracking-[-0.65px]"><div class="text-right">18:23</div><div class="text-right">20.11.2022</div></div>
    </div>
  </div>
</div>
</body>
</html>
